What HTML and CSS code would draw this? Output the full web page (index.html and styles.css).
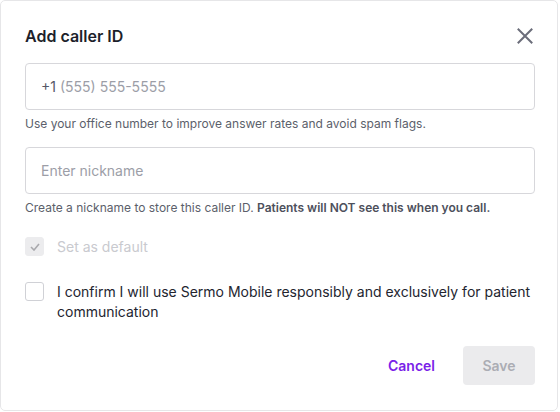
FILE: index.html
```html
<!DOCTYPE html>
<html>
<head>
<meta charset="utf-8">
<link rel="stylesheet" href="styles.css">
</head>
<body>
<div class="dialog">
  <div class="header">
    <h1 class="title">Add caller ID</h1>
    <button class="close" aria-label="Close">
      <svg width="16" height="16" viewBox="0 0 16 16"><path d="M1.5 1.5 L14.5 14.5 M14.5 1.5 L1.5 14.5" stroke="#6b6d7a" stroke-width="2" fill="none" stroke-linecap="square"/></svg>
    </button>
  </div>
  <div class="field">
    <div class="input"><span class="prefix">+1</span><span class="ph">(555) 555-5555</span></div>
    <p class="help">Use your office number to improve answer rates and avoid spam flags.</p>
  </div>
  <div class="field">
    <div class="input"><span class="ph">Enter nickname</span></div>
    <p class="help">Create a nickname to store this caller ID. <b>Patients will NOT see this when you call.</b></p>
  </div>
  <label class="check disabled">
    <span class="box checked">
      <svg width="10" height="8" viewBox="0 0 10 8"><path d="M1 4 L4 7 L9 1" stroke="#a9a9ad" stroke-width="1.6" fill="none"/></svg>
    </span>
    <span class="label">Set as default</span>
  </label>
  <label class="check">
    <span class="box"></span>
    <span class="label">I confirm I will use Sermo Mobile responsibly and exclusively for patient communication</span>
  </label>
  <div class="actions">
    <button class="cancel">Cancel</button>
    <button class="save">Save</button>
  </div>
</div>
</body>
</html>
```
FILE: styles.css
```css
* { box-sizing: border-box; }
html, body { margin: 0; padding: 0; background: #fff; }
body { font-family: "Inter", "Lato", sans-serif; color: #1f2230; }
.dialog {
  width: 558px;
  height: 411px;
  border: 1px solid #e6e6e8;
  border-radius: 5px;
  padding: 24px 22px 0 24px;
  background: #fff;
}
.header { display: flex; justify-content: space-between; align-items: center; height: 22px; margin-bottom: 16px; }
.title { margin: 0; font-size: 16px; font-weight: 600; color: #1d1f2b; }
.close { background: none; border: 0; padding: 0; width: 16px; height: 16px; margin-right: 2px; display: flex; }
.field { margin-bottom: 15px; }
.input {
  height: 47px; border: 1px solid #d7d7db; border-radius: 4px;
  display: flex; align-items: center; padding: 0 15px; font-size: 14px;
}
.prefix { color: #555866; margin-right: 4px; }
.ph { color: #9c9ea7; }
.help { margin: 6px 0 0 0; font-size: 12px; color: #5c5f6b; line-height: 16px; }
.help b { font-weight: 600; color: #4d505c; }
.check { display: flex; align-items: flex-start; gap: 13px; font-size: 14px; line-height: 20px; color: #23252f; }
.check.disabled { color: #c9cacf; margin-top: 21px; margin-bottom: 25px; }
.box { flex: none; width: 19px; height: 19px; border: 1px solid #d0d1d6; border-radius: 3px; display: flex; align-items: center; justify-content: center; margin-top: 0; }
.box.checked { background: #ececee; border-color: #ececee; }
.actions { display: flex; justify-content: flex-end; align-items: center; margin-top: 24px; gap: 28px; }
.cancel { background: none; border: 0; font-family: inherit; font-size: 14px; font-weight: 600; color: #7a1fe8; padding: 0; }
.save { width: 72px; height: 39px; border: 0; border-radius: 4px; background: #ebebed; color: #abadb4; font-family: inherit; font-size: 14px; font-weight: 600; }
```
